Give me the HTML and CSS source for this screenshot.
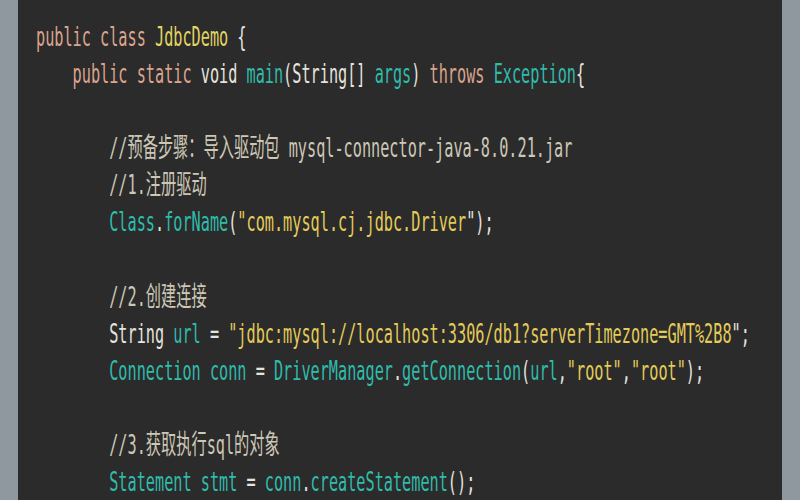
FILE: index.html
```html
<!DOCTYPE html>
<html lang="zh-CN">
<head>
    <meta charset="UTF-8">
    <title>JdbcDemo</title>
    <link rel="stylesheet" href="styles.css">
</head>
<body>
    <div class="panel">
<pre class="code"><span class="kw">public class</span> <span class="cls">JdbcDemo</span> {
    <span class="kw">public static</span> void <span class="fn">main</span>(String[] <span class="fn">args</span>) <span class="kw">throws</span> <span class="fn">Exception</span>{

        <span class="cm">//预备步骤：导入驱动包 mysql-connector-java-8.0.21.jar</span>
        <span class="cm">//1.注册驱动</span>
        <span class="fn">Class</span>.<span class="fn">forName</span>(<span class="str">"com.mysql.cj.jdbc.Driver</span>");

        <span class="cm">//2.创建连接</span>
        String <span class="fn">url</span> = <span class="str">"jdbc:mysql://localhost:3306/db1?serverTimezone=GMT%2B8</span>";
        <span class="fn">Connection conn</span> = <span class="fn">DriverManager</span>.<span class="fn">getConnection</span>(<span class="fn">url</span>,<span class="str">"root"</span>,<span class="str">"root"</span>);

        <span class="cm">//3.获取执行sql的对象</span>
        <span class="fn">Statement stmt</span> = <span class="fn">conn</span>.<span class="fn">createStatement</span>();
</pre>
    </div>
</body>
</html>
```

FILE: styles.css
```css
body {
    margin: 0;
    background-color: #8f979f;
}

.panel {
    margin: 0 18px;
    padding: 18px 0 0 18px;
    height: 482px;
    background-color: #2b2b2c;
    overflow: hidden;
}

.code {
    margin: 0;
    font-family: "DejaVu Sans Mono", "Noto Sans CJK SC", monospace;
    font-size: 27px;
    line-height: 37.1px;
    color: #e6e4de;
    transform: scaleX(0.563);
    transform-origin: left top;
    white-space: pre;
}

.kw { color: #dca48c; }
.cls { color: #e2d562; }
.fn { color: #2fbcab; }
.str { color: #e4cc58; }
.cm { color: #cdc8b6; }
```
